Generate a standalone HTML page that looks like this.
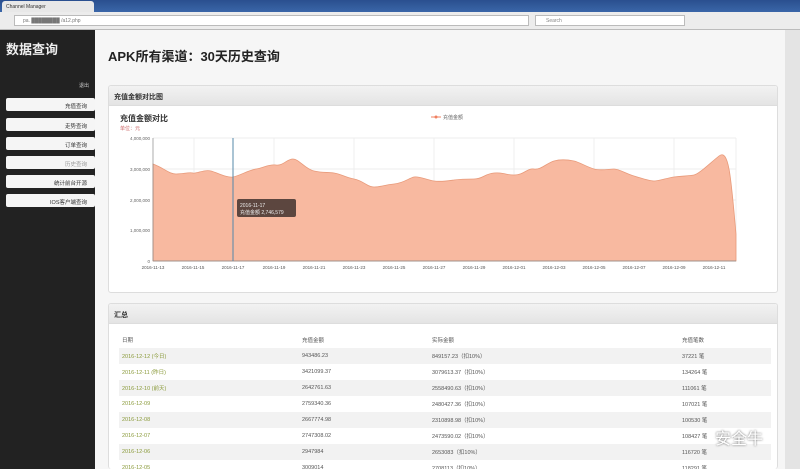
<!DOCTYPE html>
<html style="overflow:hidden;width:800px;height:469px"><head><meta charset="utf-8"><style>
*{margin:0;padding:0;box-sizing:border-box}
body{width:800px;height:469px;overflow:hidden;background:#f6f6f6;font-family:"Liberation Sans","Noto Sans CJK SC",sans-serif;position:relative}
.tabbar{position:absolute;left:0;top:0;width:800px;height:12px;background:linear-gradient(#2a4f8f,#3a66a8)}
.tab{position:absolute;left:2px;top:1px;width:92px;height:12px;background:#e8e8e8;border-radius:3px 3px 0 0;font-size:5px;color:#333;padding:3px 4px}
.addr{position:absolute;left:0;top:12px;width:800px;height:18px;background:#ececec;border-bottom:1px solid #bbb}
.url{position:absolute;left:14px;top:3px;width:515px;height:11px;background:#fff;border:1px solid #bbb;font-size:5px;color:#777;padding:2px 8px}
.search{position:absolute;left:535px;top:3px;width:150px;height:11px;background:#fff;border:1px solid #bbb;font-size:5px;color:#888;padding:2px 10px}
.side{position:absolute;left:0;top:30px;width:95px;height:439px;background:#222}
.side h1{color:#eee;font-size:13px;font-weight:bold;position:absolute;left:6px;top:9px}
.side .q{position:absolute;right:6px;top:52px;color:#ccc;font-size:5px}
.btn{position:absolute;left:6px;width:89px;height:13px;background:#f5f5f5;border-radius:2px;font-size:5.5px;color:#333;text-align:right;padding:3.5px 8px 0 0}
.scroll{position:absolute;left:785px;top:30px;width:15px;height:439px;background:#e4e4e4}
h2{position:absolute;left:108px;top:46px;font-size:13px;font-weight:bold;color:#222}
.panel{position:absolute;left:108px;width:670px;background:#fff;border:1px solid #ddd;border-radius:3px;overflow:hidden}
.ph{height:20px;background:linear-gradient(#f2f2f2,#e4e4e4);border-bottom:1px solid #ddd;font-size:7px;font-weight:bold;color:#333;padding:6px 5px}
table{position:absolute;left:10px;top:28px;width:652px;border-collapse:collapse;font-size:5.5px;color:#555}
td{height:16px;padding-left:3px}
tr.s td{background:#f2f2f2}
.g{color:#8a9a3a}
</style></head><body>
<div class="tabbar"><div class="tab">Channel Manager</div></div>
<div class="addr"><div class="url">pa. ████████ /a12.php</div><div class="search">Search</div></div>
<div class="side"><h1>数据查询</h1><div class="q">退出</div>
<div class="btn" style="top:68px">充值查询</div>
<div class="btn" style="top:88px">走势查询</div>
<div class="btn" style="top:107px">订单查询</div>
<div class="btn" style="top:126px;color:#999">历史查询</div>
<div class="btn" style="top:145px">统计前台开源</div>
<div class="btn" style="top:164px">IOS客户端查询</div>
</div>
<div class="scroll"></div>
<h2>APK所有渠道：30天历史查询</h2>
<div class="panel" style="top:85px;height:208px"><div class="ph">充值金额对比图</div>
<svg width="670" height="188" style="position:absolute;left:0;top:20px">
<text x="11" y="15" font-size="8" font-weight="bold" fill="#333">充值金额对比</text>
<text x="11" y="24" font-size="5" fill="#c66">单位：元</text>
<line x1="322" y1="11" x2="332" y2="11" stroke="#f08060"/><circle cx="327" cy="11" r="1.5" fill="#f08060"/><text x="334" y="13" font-size="5" fill="#666">充值金额</text>
<g stroke="#e8e8e8" stroke-width="0.7">
<line x1="44" y1="32" x2="627" y2="32"/><line x1="44" y1="63" x2="627" y2="63"/><line x1="44" y1="94" x2="627" y2="94"/><line x1="44" y1="124" x2="627" y2="124"/>
<line x1="85" y1="32" x2="85" y2="155"/><line x1="165" y1="32" x2="165" y2="155"/><line x1="245" y1="32" x2="245" y2="155"/><line x1="325" y1="32" x2="325" y2="155"/><line x1="405" y1="32" x2="405" y2="155"/><line x1="485" y1="32" x2="485" y2="155"/><line x1="565" y1="32" x2="565" y2="155"/><line x1="627" y1="32" x2="627" y2="155"/></g>
<g font-size="4.5" fill="#666" text-anchor="end"><text x="41" y="34">4,000,000</text><text x="41" y="65">3,000,000</text><text x="41" y="96">2,000,000</text><text x="41" y="126">1,000,000</text><text x="41" y="157">0</text></g>
<path d="M44 58 C55 62,60 68,67 68 S80 66,84 67 S95 63,102 65 S118 72,124 71 S140 64,147 63 S160 58,167 59 S178 53,184 53 S196 63,205 65 S218 66,225 67 S235 71,245 73 S258 81,265 81 S275 79,285 78 S300 72,305 71 S318 74,325 75 S338 75,345 74 S356 73,365 73 S375 68,385 67 S395 69,405 69 S418 62,425 63 S438 57,445 55 S460 54,465 55 S478 61,485 63 S500 63,505 63 S518 68,525 70 S540 75,545 75 S558 72,565 71 S580 70,585 69 S600 58,610 50 S622 72,627 128 L627 155 L44 155 Z" fill="#f8b9a0" stroke="#e89a7a" stroke-width="0.8"/>
<line x1="44" y1="32" x2="44" y2="155" stroke="#888" stroke-width="0.7"/>
<line x1="44" y1="155" x2="627" y2="155" stroke="#888" stroke-width="0.7"/>
<line x1="124" y1="32" x2="124" y2="155" stroke="#5588aa" stroke-width="1"/>
<rect x="128" y="93" width="59" height="18" rx="2" fill="#4a3a34" opacity="0.9"/>
<text x="131" y="101" font-size="5" fill="#eee">2016-11-17</text><text x="131" y="108" font-size="5" fill="#eee">充值金额  2,746,579</text>
<g font-size="4.5" fill="#555" text-anchor="middle"><text x="44" y="163">2016-11-13</text><text x="84" y="163">2016-11-15</text><text x="124" y="163">2016-11-17</text><text x="165" y="163">2016-11-19</text><text x="205" y="163">2016-11-21</text><text x="245" y="163">2016-11-23</text><text x="285" y="163">2016-11-25</text><text x="325" y="163">2016-11-27</text><text x="365" y="163">2016-11-29</text><text x="405" y="163">2016-12-01</text><text x="445" y="163">2016-12-03</text><text x="485" y="163">2016-12-05</text><text x="525" y="163">2016-12-07</text><text x="565" y="163">2016-12-09</text><text x="605" y="163">2016-12-11</text></g>
</svg></div>
<div class="panel" style="top:303px;height:166px;border-bottom:none"><div class="ph">汇总</div>
<table>
<tr><td style="width:180px">日期</td><td style="width:130px">充值金额</td><td style="width:250px">实际金额</td><td>充值笔数</td></tr>
<tr class="s"><td class="g">2016-12-12 (今日)</td><td>943486.23</td><td>849157.23（扣10%）</td><td>37221 笔</td></tr>
<tr><td class="g">2016-12-11 (昨日)</td><td>3421099.37</td><td>3079613.37（扣10%）</td><td>134264 笔</td></tr>
<tr class="s"><td class="g">2016-12-10 (前天)</td><td>2642761.63</td><td>2558490.63（扣10%）</td><td>111061 笔</td></tr>
<tr><td class="g">2016-12-09</td><td>2759340.36</td><td>2480427.36（扣10%）</td><td>107021 笔</td></tr>
<tr class="s"><td class="g">2016-12-08</td><td>2667774.98</td><td>2310898.98（扣10%）</td><td>100530 笔</td></tr>
<tr><td class="g">2016-12-07</td><td>2747308.02</td><td>2473590.02（扣10%）</td><td>108427 笔</td></tr>
<tr class="s"><td class="g">2016-12-06</td><td>2947984</td><td>2653083（扣10%）</td><td>116720 笔</td></tr>
<tr><td class="g">2016-12-05</td><td>3009014</td><td>2708113（扣10%）</td><td>118291 笔</td></tr>
</table></div>
<div style="position:absolute;left:715px;top:425px;font-size:16px;color:#fff;text-shadow:0 0 2px #555">安全牛</div>
</body></html>
